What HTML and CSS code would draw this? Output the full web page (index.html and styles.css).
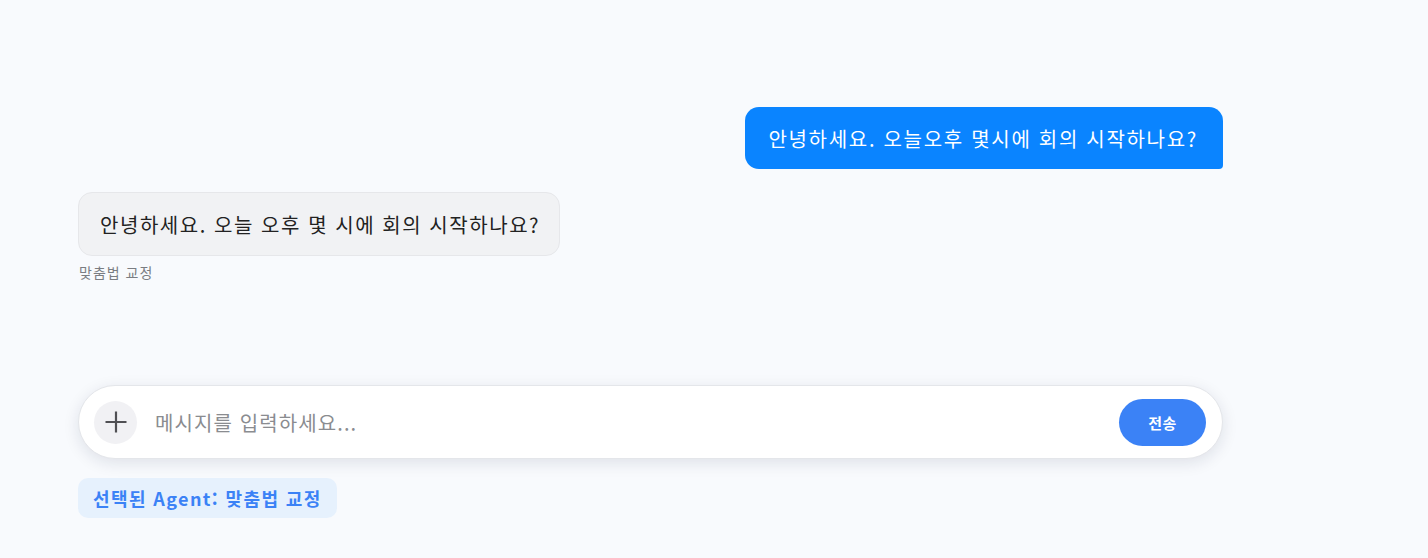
FILE: index.html
```html
<!DOCTYPE html>
<html lang="ko">
<head>
<meta charset="utf-8">
<link rel="stylesheet" href="styles.css">
</head>
<body>
<div class="app">
  <div class="messages">
    <div class="row row-user">
      <div class="bubble bubble-user">안녕하세요. 오늘오후 몇시에 회의 시작하나요?</div>
    </div>
    <div class="row row-bot">
      <div class="bubble bubble-bot">안녕하세요. 오늘 오후 몇 시에 회의 시작하나요?</div>
      <div class="bot-label">맞춤법 교정</div>
    </div>
  </div>
  <div class="composer">
    <div class="input-bar">
      <button class="plus-btn" aria-label="추가">
        <svg width="24" height="24" viewBox="0 0 24 24"><path d="M12 1.5v21M1.5 12h21" stroke="#505054" stroke-width="2.2" fill="none"/></svg>
      </button>
      <div class="placeholder">메시지를 입력하세요...</div>
      <button class="send-btn">전송</button>
    </div>
    <div class="agent-badge">선택된 Agent: 맞춤법 교정</div>
  </div>
</div>
</body>
</html>
```
FILE: styles.css
```css
* { box-sizing: border-box; }
html, body { margin: 0; padding: 0; }
body {
  background: #f8fafd;
  font-family: "Noto Sans CJK KR", "Noto Sans", sans-serif;
  height: 558px;
  overflow: hidden;
}
.app {
  width: 1145px;
  margin-left: 78px;
  height: 558px;
  display: flex;
  flex-direction: column;
}
.messages {
  flex: 1;
  padding-top: 107px;
  display: flex;
  flex-direction: column;
  gap: 23px;
}
.row { display: flex; flex-direction: column; }
.row-user { align-items: flex-end; }
.row-bot { align-items: flex-start; }
.bubble {
  display: flex;
  align-items: center;
  white-space: nowrap;
}
.bubble-user {
  height: 62px;
  padding: 0 25px 0 23px;
  background: #0a84ff;
  color: #fff;
  font-size: 20px;
  letter-spacing: 1.7px;
  border-radius: 14px 14px 4px 14px;
}
.bubble-bot {
  height: 64px;
  padding: 0 19px 0 21px;
  background: #f1f2f4;
  border: 1px solid #e6e7ea;
  color: #222;
  font-size: 20px;
  letter-spacing: 1.55px;
  border-radius: 14px;
}
.bot-label {
  margin-top: 6px;
  margin-left: 1px;
  font-size: 14px;
  letter-spacing: 1px;
  color: #7a7d82;
}
.composer {
  padding-bottom: 40px;
  display: flex;
  flex-direction: column;
  align-items: flex-start;
}
.input-bar {
  width: 100%;
  height: 74px;
  background: #fff;
  border: 1px solid #e4e6ea;
  border-radius: 37px;
  box-shadow: 0 4px 16px rgba(20, 30, 60, 0.11);
  display: flex;
  align-items: center;
  padding: 0 16px 0 15px;
}
.plus-btn {
  width: 43px;
  height: 43px;
  border-radius: 50%;
  border: none;
  background: #f1f1f4;
  display: flex;
  align-items: center;
  justify-content: center;
  padding: 0;
}
.placeholder {
  flex: 1;
  margin-left: 18px;
  font-size: 20px;
  color: #8a8c90;
  letter-spacing: 1.1px;
}
.send-btn {
  width: 87px;
  height: 47px;
  border: none;
  border-radius: 24px;
  background: #3b82f6;
  color: #fff;
  font-family: "Noto Sans CJK KR", sans-serif;
  font-weight: 700;
  font-size: 15px;
  letter-spacing: 0.5px;
}
.agent-badge {
  margin-top: 19px;
  height: 40px;
  padding: 0 15px;
  display: flex;
  align-items: center;
  background: #e6f1fd;
  color: #3b82f6;
  border-radius: 10px;
  font-size: 18px;
  letter-spacing: 1.4px;
  font-weight: 700;
}
```
